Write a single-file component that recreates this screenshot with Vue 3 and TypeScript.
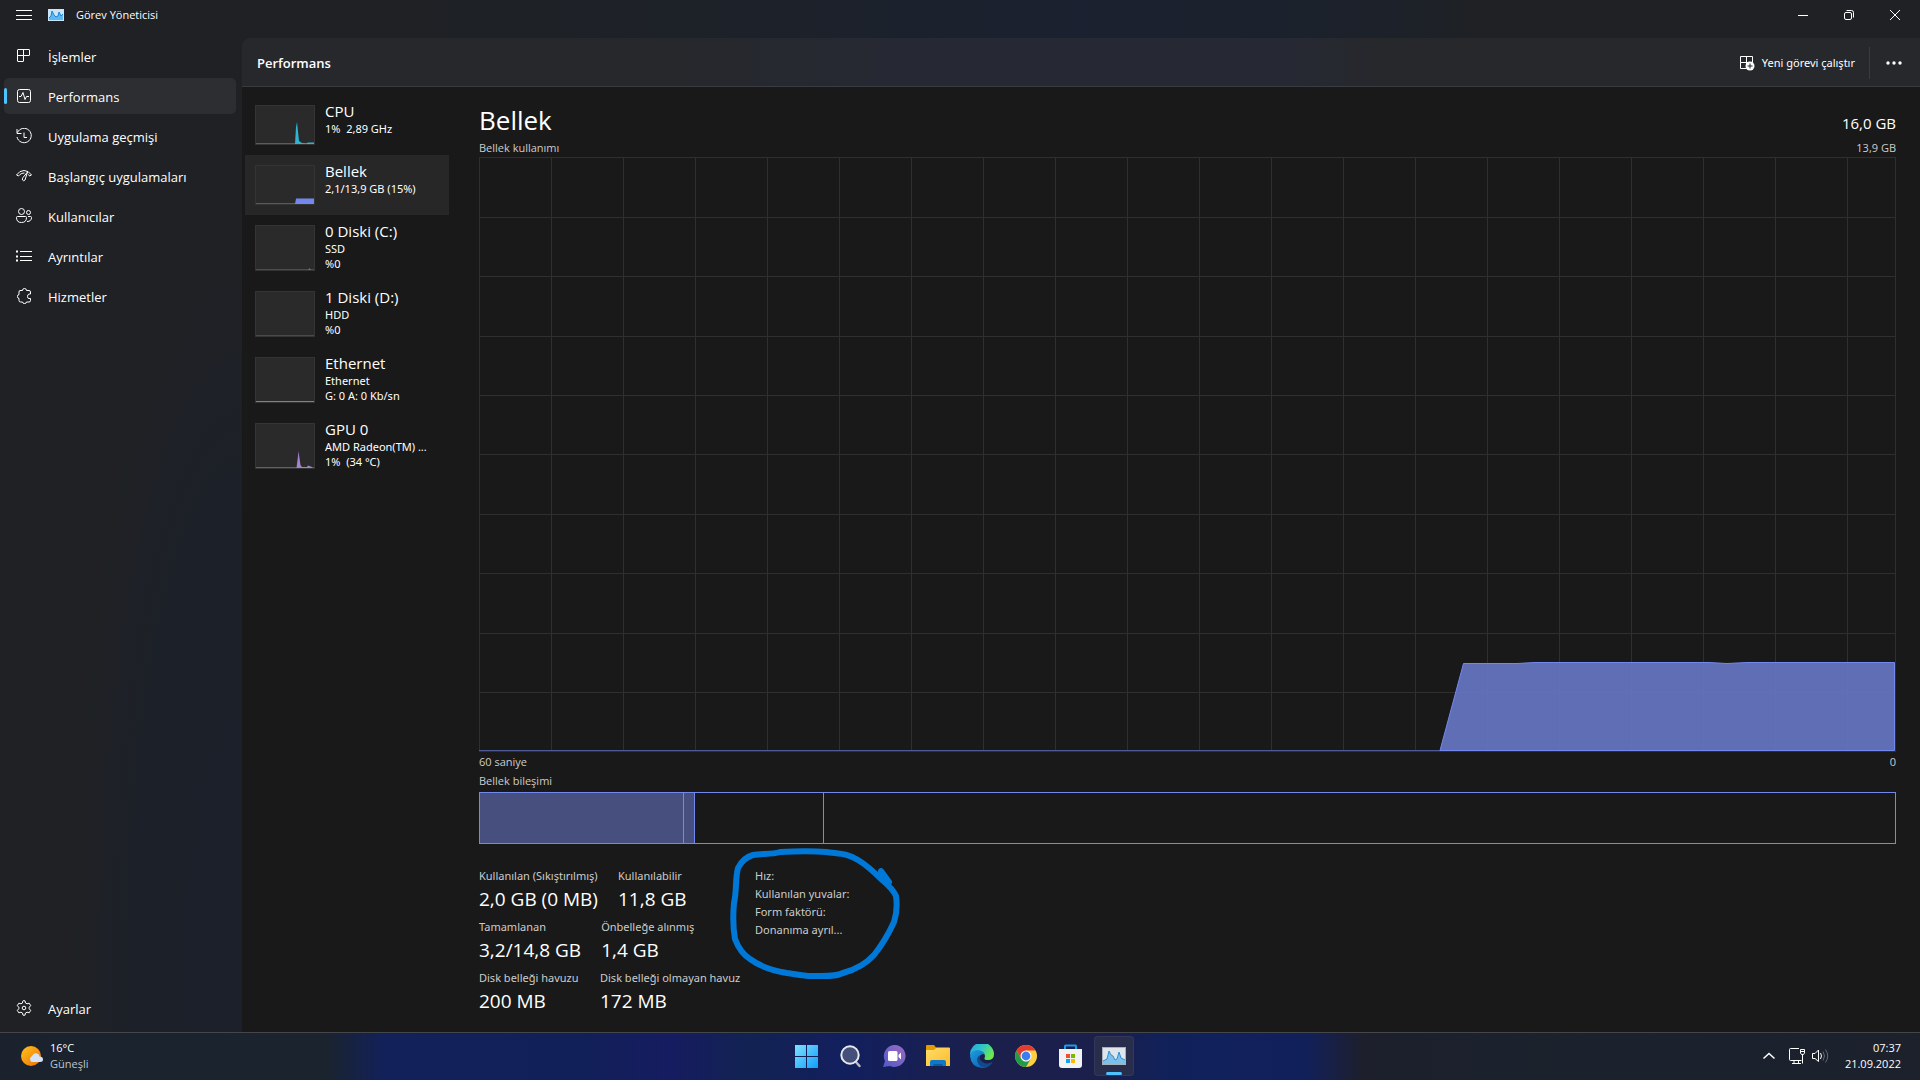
<script setup lang="ts">
interface Device {
  name: string
  lines: string[]
  color: string
  height: number
  base: string
  shape: string
  selected?: boolean
}

interface Stat {
  label: string
  value: string
}

const navItems = [
  { id: 'processes', label: 'İşlemler' },
  { id: 'performance', label: 'Performans' },
  { id: 'history', label: 'Uygulama geçmişi' },
  { id: 'startup', label: 'Başlangıç uygulamaları' },
  { id: 'users', label: 'Kullanıcılar' },
  { id: 'details', label: 'Ayrıntılar' },
  { id: 'services', label: 'Hizmetler' },
]

const devices: Device[] = [
  {
    name: 'CPU',
    lines: ['1%  2,89 GHz'],
    color: '#2fb4d4',
    height: 40,
    base: '#27707f',
    shape: 'M40 39L41 22L42 17L44 36L47 38L51 38.500L53 37.500L59 37.500V39Z',
  },
  {
    name: 'Bellek',
    lines: ['2,1/13,9 GB (15%)'],
    color: '#7387ee',
    height: 40,
    base: '#4c568f',
    shape: 'M40 39L41 33.500H59V39Z',
    selected: true,
  },
  {
    name: '0 Diski (C:)',
    lines: ['SSD', '%0'],
    color: '#2a8f89',
    height: 46,
    base: '#245c5a',
    shape: 'M53 45L54.500 43L56 45Z',
  },
  { name: '1 Diski (D:)', lines: ['HDD', '%0'], color: '#2a8f89', height: 46, base: '#245c5a', shape: '' },
  { name: 'Ethernet', lines: ['Ethernet', 'G: 0 A: 0 Kb/sn'], color: '#c36f9b', height: 46, base: '#a9688c', shape: '' },
  {
    name: 'GPU 0',
    lines: ['AMD Radeon(TM) ...', '1%  (34 °C)'],
    color: '#a283cf',
    height: 46,
    base: '#685782',
    shape: 'M41.500 45L43 33L43.500 28L45.500 42L47 44L52 44L53 42.500L57 44V45Z',
  },
]

const statRows: Stat[][] = [
  [
    { label: 'Kullanılan (Sıkıştırılmış)', value: '2,0 GB (0 MB)' },
    { label: 'Kullanılabilir', value: '11,8 GB' },
  ],
  [
    { label: 'Tamamlanan', value: '3,2/14,8 GB' },
    { label: 'Önbelleğe alınmış', value: '1,4 GB' },
  ],
  [
    { label: 'Disk belleği havuzu', value: '200 MB' },
    { label: 'Disk belleği olmayan havuz', value: '172 MB' },
  ],
]

const specs = ['Hız:', 'Kullanılan yuvalar:', 'Form faktörü:', 'Donanıma ayrıl...']

const columns = Array.from({ length: 20 }, (_, i) => i * 72)
const rows = [0, 60, 119, 179, 238, 297, 357, 416, 476, 535, 594]
</script>

<template>
  <div class="desktop">
    <div class="window">
      <header class="titlebar">
        <button class="menu-button" aria-label="Menü">
          <svg width="16" height="16" viewBox="0 0 16 16"><path d="M0 3.500H16M0 8.500H16M0 12.500H16" class="thin" /></svg>
        </button>
        <svg class="app-icon" width="16" height="12" viewBox="0 0 16 12">
          <rect width="16" height="12" fill="#c9e6f8" />
          <path d="M1 11V9L3 7L4 2L6 6L8 8L10 7L11 3L13 7L15 5V11Z" fill="#5db8f2" />
          <path d="M1 9L3 7L4 2L6 6L8 8L10 7L11 3L13 7L15 5" fill="none" stroke="#1c83d1" />
        </svg>
        <span class="app-title">Görev Yöneticisi</span>
        <div class="caption">
          <button aria-label="Simge durumuna küçült">
            <svg width="12" height="12" viewBox="0 0 12 12"><path d="M1 6.500H11" class="thin" /></svg>
          </button>
          <button aria-label="Önceki boyut">
            <svg width="12" height="12" viewBox="0 0 12 12">
              <rect x="1.500" y="3.500" width="7" height="7" rx="1.500" class="thin" />
              <path d="M3.500 1.500H8.500Q10.500 1.500 10.500 3.500V8.500" class="thin" />
            </svg>
          </button>
          <button aria-label="Kapat">
            <svg width="12" height="12" viewBox="0 0 12 12"><path d="M1 1L11 11M11 1L1 11" class="thin" /></svg>
          </button>
        </div>
      </header>

      <div class="body">
        <nav class="sidebar">
          <button
            v-for="item in navItems"
            :key="item.id"
            class="nav-item"
            :class="{ active: item.id === 'performance' }"
          >
            <svg class="nav-icon" width="16" height="16" viewBox="0 0 16 16">
              <path
                v-if="item.id === 'processes'"
                d="M2 1.500H13Q13.500 1.500 13.500 2V7Q13.500 7.500 13 7.500H7.500V13Q7.500 13.500 7 13.500H2Q1.500 13.500 1.500 13V2Q1.500 1.500 2 1.500ZM1.500 7.500H7.500V1.500"
              />
              <g v-else-if="item.id === 'performance'">
                <rect x="1.500" y="1.500" width="13" height="13" rx="2" />
                <path d="M3 8.500H5L7 4.500L9 11.500L10.500 8.500H13" stroke-linejoin="round" />
              </g>
              <g v-else-if="item.id === 'history'">
                <path d="M1.500 4.500A7.200 7.200 0 1 1 1 9M1 1V5.500H5.500M8 4.500V9.500H11" />
              </g>
              <g v-else-if="item.id === 'startup'">
                <path d="M.5 7Q3.500 2.500 8 2.500Q12.500 2.500 15.500 7M.5 7L2.500 8L4 6.500M15.500 7L13.500 8L12.500 6.500M4 6.500Q5.500 5 8.500 5" />
                <path d="M11.500 4L9 12Q7.500 13.500 6.500 12Q6 11 7 9.500Z" />
              </g>
              <g v-else-if="item.id === 'users'">
                <circle cx="5.500" cy="3.500" r="3" />
                <circle cx="12.500" cy="4.500" r="2" />
                <path d="M1.500 8.500H9.500Q10.500 8.500 10.500 9.500Q10.500 14.500 5.500 14.500Q.5 14.500 .5 9.500Q.5 8.500 1.500 8.500ZM12 8.500H14.500Q15.500 8.500 15.500 9.500Q15.500 13.500 11 13.500" />
              </g>
              <g v-else-if="item.id === 'details'">
                <path d="M4 3.500H16M4 8.500H16M4 12.500H16" />
                <path d="M0 3.500H2M0 8.500H2M0 12.500H2" stroke-width="2" />
              </g>
              <path
                v-else
                stroke-linejoin="round"
                d="M4 2.500H6.500Q6.500 .5 8.500 .5Q10.500 .5 10.500 2.500H13Q14.500 2.500 14.500 4V6H13Q11.500 6.500 11.500 8.500Q11.500 10.500 13 10.500H14.500V12.500Q14.500 14 13 14H10.500Q10.500 15.500 8.500 15.500Q6.500 15.500 6.500 14H4.500Q3 14 3 12.500V10.500Q1.500 10.500 1.500 8.500Q1.500 6.500 3 6.500V4Q3 2.500 4 2.500Z"
              />
            </svg>
            <span>{{ item.label }}</span>
          </button>
          <button class="nav-item settings">
            <svg class="nav-icon" width="16" height="16" viewBox="0 0 16 16">
              <path
                stroke-linejoin="round"
                d="M6.500 1.500L7 .8H9L9.500 3L11 3.800L13.200 3.200L14.700 5.700L13.200 7.200V8.800L14.700 10.300L13.200 12.800L11 12.200L9.500 13L9 15.200H7L6.500 13L5 12.200L2.800 12.800L1.300 10.300L2.800 8.800V7.200L1.300 5.700L2.800 3.200L5 3.800L6.500 3Z"
              />
              <circle cx="8" cy="8" r="1.800" />
            </svg>
            <span>Ayarlar</span>
          </button>
        </nav>

        <main class="panel">
          <div class="toolbar">
            <h1>Performans</h1>
            <button class="run-task">
              <svg width="16" height="16" viewBox="0 0 16 16">
                <path d="M1.500 1.500H13.500V7.500H1.500ZM7.500 1.500V13.500M1.500 7.500V13.500H7.500" class="thin" />
                <circle cx="11" cy="11" r="4.500" fill="#fff" />
                <path d="M11 8.500V13.500M8.500 11H13.500" stroke="#222" />
              </svg>
              <span>Yeni görevi çalıştır</span>
            </button>
            <button class="more" aria-label="Diğer seçenekler">
              <svg width="16" height="4" viewBox="0 0 16 4" fill="#fff">
                <circle cx="2" cy="2" r="1.700" /><circle cx="8" cy="2" r="1.700" /><circle cx="14" cy="2" r="1.700" />
              </svg>
            </button>
          </div>

          <div class="content">
            <div class="devices">
              <button v-for="device in devices" :key="device.name" class="device" :class="{ selected: device.selected }">
                <svg class="thumb" width="60" :height="device.height" :viewBox="`0 0 60 ${device.height}`">
                  <rect x=".5" y=".5" width="59" :height="device.height - 1" fill="#2a2a2a" stroke="#343434" />
                  <path :d="`M1 ${device.height - 1.5}H59`" :stroke="device.base" />
                  <path v-if="device.shape" :d="device.shape" :fill="device.color" />
                </svg>
                <span class="device-text">
                  <span class="device-name">{{ device.name }}</span>
                  <span v-for="line in device.lines" :key="line" class="device-line">{{ line }}</span>
                </span>
              </button>
            </div>

            <section class="detail">
              <div class="detail-head">
                <h2>Bellek</h2>
                <span class="capacity">16,0 GB</span>
              </div>
              <div class="axis">
                <span>Bellek kullanımı</span>
                <span>13,9 GB</span>
              </div>
              <div class="chart">
                <svg viewBox="0 0 1417 595" preserveAspectRatio="none" aria-hidden="true">
                  <g stroke="#2f2f2f" fill="none">
                    <path v-for="x in columns" :key="`c${x}`" :d="`M${x + 0.5} 0V595`" vector-effect="non-scaling-stroke" />
                    <path d="M1416.500 0V595" vector-effect="non-scaling-stroke" />
                    <path v-for="y in rows" :key="`r${y}`" :d="`M0 ${y + 0.5}H1417`" vector-effect="non-scaling-stroke" />
                  </g>
                  <path d="M0 593.500H961" stroke="#4e5998" vector-effect="non-scaling-stroke" />
                  <path
                    d="M961 593.500L984.500 506.500H1038L1056 505.500H1230L1248 506.500L1268 505.500H1415.500V593.500Z"
                    fill="#6878c8"
                    fill-opacity=".9"
                    stroke="#7388ee"
                    vector-effect="non-scaling-stroke"
                  />
                </svg>
              </div>
              <div class="axis seconds">
                <span>60 saniye</span>
                <span>0</span>
              </div>
              <div class="axis composition-label"><span>Bellek bileşimi</span></div>
              <div class="composition">
                <span class="segment used"></span>
                <span class="segment modified"></span>
                <span class="segment standby"></span>
              </div>

              <div class="figures">
                <div class="stats">
                  <dl v-for="(row, i) in statRows" :key="i" class="stat-row">
                    <div v-for="stat in row" :key="stat.label" class="stat">
                      <dt>{{ stat.label }}</dt>
                      <dd>{{ stat.value }}</dd>
                    </div>
                  </dl>
                </div>
                <div class="specs">
                  <span v-for="spec in specs" :key="spec">{{ spec }}</span>
                  <svg class="marker" width="180" height="136" viewBox="0 0 180 136" aria-hidden="true">
                    <path
                      d="M26 10C34 8 44 10 53 7C70 6 88 6 99 7C112 9 120 8 131 15C141 21 149 29 154 34C160 39 166 44 169 51C170 58 170 68 167 77C162 88 155 100 147 110C137 121 127 125 116 128C108 132 98 131 84 131C76 131 68 129 60 128C47 126 35 123 23 114C15 109 11 102 8 94C6 83 6 69 7 58C10 45 8 34 11 23C14 17 19 12 26 10Z"
                    />
                    <path d="M154 26L162 37L153 32Z" />
                  </svg>
                </div>
              </div>
            </section>
          </div>
        </main>
      </div>
    </div>

    <footer class="taskbar">
      <button class="weather">
        <svg width="24" height="22" viewBox="0 0 24 22">
          <defs>
            <linearGradient id="sun" x1="0" y1="0" x2="1" y2="1"><stop stop-color="#ffc61a" /><stop offset="1" stop-color="#ee6c0a" /></linearGradient>
          </defs>
          <circle cx="11" cy="11" r="10" fill="url(#sun)" />
          <path d="M11.500 17A3.500 3.500 0 0 1 12 11Q13.500 7.500 17 8.500Q19.500 9.200 19.500 11.500Q23 11.500 23 14.500Q23 17 20 17Z" fill="#d5e3f8" />
        </svg>
        <span class="weather-text"><span>16°C</span><span class="muted">Güneşli</span></span>
      </button>

      <div class="apps">
        <button aria-label="Başlat">
          <svg width="24" height="24" viewBox="0 0 24 24">
            <defs><linearGradient id="win" x1="0" y1="0" x2="1" y2="1"><stop stop-color="#7fe0ff" /><stop offset="1" stop-color="#109dfa" /></linearGradient></defs>
            <path d="M1 1H12V12H1ZM13 1H24V12H13ZM1 13H12V24H1ZM13 13H24V24H13Z" fill="url(#win)" />
          </svg>
        </button>
        <button aria-label="Ara">
          <svg width="24" height="24" viewBox="0 0 24 24">
            <path d="M17 17L21.500 22" stroke="#b9bac4" stroke-width="2.500" stroke-linecap="round" />
            <circle cx="12" cy="11" r="8.700" fill="#45507a" stroke="#e8e8ee" stroke-width="2" />
          </svg>
        </button>
        <button aria-label="Sohbet">
          <svg width="24" height="24" viewBox="0 0 24 24">
            <defs><linearGradient id="chat" x1="1" y1="0" x2="0" y2="1"><stop stop-color="#9c6bc0" /><stop offset="1" stop-color="#5059cc" /></linearGradient></defs>
            <path d="M13 1A11 11 0 1 1 8 22L1 23L3 17A11 11 0 0 1 13 1Z" fill="url(#chat)" />
            <rect x="6" y="7" width="9.500" height="10" rx="1.500" fill="#fff" />
            <path d="M16.500 11L19 8.500V15.500L16.500 13Z" fill="#fff" />
          </svg>
        </button>
        <button aria-label="Dosya Gezgini">
          <svg width="24" height="24" viewBox="0 0 24 24">
            <defs><linearGradient id="folder" x1="0" y1="0" x2="1" y2="1"><stop stop-color="#ffdc68" /><stop offset="1" stop-color="#fcbc2c" /></linearGradient></defs>
            <path d="M0 2Q0 1 1 1H8L10 3.500L8 7H0Z" fill="#e29b06" />
            <path d="M0 6H8L10 3.500H23Q24 3.500 24 4.500V22H0Z" fill="url(#folder)" />
            <path d="M4 22V18Q4 16 6 16H18Q20 16 20 18V22Z" fill="#1178c8" />
            <path d="M7.500 22V20H16.500V22Z" fill="#0b5ba4" />
          </svg>
        </button>
        <button aria-label="Microsoft Edge">
          <svg width="24" height="24" viewBox="0 0 24 24">
            <defs>
              <linearGradient id="edgeTop" x1="0" y1="0" x2="1" y2=".5"><stop stop-color="#1fa3e0" /><stop offset=".55" stop-color="#33c6c4" /><stop offset="1" stop-color="#6bea4a" /></linearGradient>
              <linearGradient id="edgeSide" x1="0" y1="0" x2="1" y2="1"><stop stop-color="#1b9de2" /><stop offset="1" stop-color="#0c55a6" /></linearGradient>
            </defs>
            <path d="M0 11A12 12 0 0 1 24 10Q24 16 18 16Q14 16 14.500 14Q16 11 13 8.500Q6 5 0 11Z" fill="url(#edgeTop)" />
            <path d="M0 12Q1 6 8 6Q14 7 14.500 10Q9 10 9 15Q11 21 17 20Q20 20 22.500 18Q19 24 12 24Q1 23 0 12Z" fill="url(#edgeSide)" />
            <path d="M9.500 11Q5.500 15 8 19Q10 23 14 23.500Q20 22.500 22.500 18Q17 21 12.500 18Q8.500 15 9.500 11Z" fill="#114a8b" />
          </svg>
        </button>
        <button aria-label="Google Chrome">
          <svg width="24" height="24" viewBox="0 0 24 24">
            <circle cx="12" cy="12" r="11" fill="#ffcf42" />
            <path d="M2.500 6.500A11 11 0 0 1 21.500 6.500H12L7.200 14.800Z" fill="#e33b2e" />
            <path d="M2.500 6.500L7.200 14.800L12 17.500L16.800 14.800L12 23A11 11 0 0 1 2.500 6.500Z" fill="#239a48" />
            <circle cx="12" cy="12" r="5.500" fill="#fff" />
            <circle cx="12" cy="12" r="4.400" fill="#3c7df0" />
          </svg>
        </button>
        <button aria-label="Microsoft Store">
          <svg width="24" height="24" viewBox="0 0 24 24">
            <path d="M7 6V2Q7 1.500 7.500 1.500H17.500Q18 1.500 18 2V6" fill="none" stroke="#1b9be8" stroke-width="2" />
            <path d="M1 5H24V21Q24 24 21 24H4Q1 24 1 21Z" fill="#f1f2f3" />
            <path d="M8 10H12V14H8Z" fill="#f0502b" /><path d="M13 10H17V14H13Z" fill="#7db700" />
            <path d="M8 15H12V19H8Z" fill="#12a2ee" /><path d="M13 15H17V19H13Z" fill="#fdb700" />
          </svg>
        </button>
        <button class="running" aria-label="Görev Yöneticisi">
          <svg width="24" height="24" viewBox="0 0 24 24">
            <rect y="3" width="24" height="18" fill="#a9b1b8" />
            <rect x="1" y="4" width="22" height="16" fill="#dfe6eb" />
            <path d="M1 20V17L5 15L7 7L9 11L11 12L13 16L15 15L17 8L19 14L23 16V20Z" fill="#7cc1ec" />
            <path d="M1 17L5 15L7 7L9 11L11 12L13 16L15 15L17 8L19 14L23 16" fill="none" stroke="#2f8fd0" />
          </svg>
        </button>
      </div>

      <div class="tray">
        <button aria-label="Gizli simgeleri göster">
          <svg width="16" height="16" viewBox="0 0 16 16"><path d="M2.500 10.500L8 5.500L13.500 10.500" class="thin" stroke-width="1.500" /></svg>
        </button>
        <button class="network" aria-label="Ağ ve ses">
          <svg width="16" height="16" viewBox="0 0 16 16">
            <path d="M10 .5H1.500Q.5 .5 .5 1.500V11.500Q.5 12.500 1.500 12.500H12.500M5 12.500V15.500M9.500 12.500V15.500M3 15.500H12M13.500 7V15.500" class="thin" />
            <path d="M11.500 1.500H15.500V5L14.500 6.500H12.500L11.500 5ZM11.500 3.500H15.500" class="thin" />
          </svg>
          <svg width="17" height="16" viewBox="0 0 17 16">
            <path d="M.5 5.500H3L6.500 2V13.500L3 10.500H.5Z" class="thin" stroke-linejoin="round" />
            <path d="M8.500 5Q10.500 8 8.500 11" class="thin" />
            <path d="M11 3.500Q14 8 11 12.500M13.500 1.500Q18 8 13.500 14.500" fill="none" stroke="#646a72" />
          </svg>
        </button>
        <button class="clock"><span>07:37</span><span>21.09.2022</span></button>
      </div>
    </footer>
  </div>
</template>

<style>
body {
  margin: 0;
  background: #191919;
}
</style>

<style scoped>
.desktop {
  display: flex;
  flex-direction: column;
  min-height: 100vh;
  background: #191919;
  color: #fff;
  font-family: "Open Sans", "Noto Sans", sans-serif;
  font-size: 13px;
  line-height: 16px;
}

button {
  padding: 0;
  border: 0;
  background: none;
  color: inherit;
  font: inherit;
  text-align: left;
}

h1,
h2,
dl,
dd {
  margin: 0;
}

svg {
  display: block;
  flex: none;
}

.thin {
  fill: none;
  stroke: #fff;
}

.window {
  display: flex;
  flex: 1;
  flex-direction: column;
  background: linear-gradient(90deg, #202124 0%, #1f2125 22%, #1c212a 42%, #1b2130 56%, #1c212a 72%, #202124 78%);
}

.titlebar {
  display: flex;
  align-items: center;
  height: 30px;
  padding: 0 2px 8px 16px;
}

.app-icon {
  margin: 0 12px 0 16px;
}

.app-title {
  font-size: 11px;
}

.caption {
  display: flex;
  margin-left: auto;
}

.caption button {
  display: flex;
  align-items: center;
  justify-content: center;
  width: 46px;
  height: 28px;
}

.body {
  display: flex;
  flex: 1;
}

.sidebar {
  display: flex;
  flex-direction: column;
  flex: none;
  gap: 4px;
  width: 232px;
  padding: 0 6px 6px 4px;
  background: radial-gradient(ellipse 70% 75% at 100% 95%, #1c202b 0%, #1c2029 60%, #1f2124 100%) #1f2024;
}

.nav-item {
  display: flex;
  align-items: center;
  gap: 16px;
  height: 36px;
  padding: 2px 0 0 12px;
  box-sizing: border-box;
  border-radius: 5px;
}

.nav-icon {
  margin-bottom: 2px;
  fill: none;
  stroke: #fff;
}

.nav-item.active {
  position: relative;
  background: #2d2e32;
}

.nav-item.active::before {
  content: "";
  position: absolute;
  left: 0;
  top: 10px;
  width: 3px;
  height: 16px;
  border-radius: 2px;
  background: #4cc2ff;
}

.settings {
  margin-top: auto;
}

.panel {
  display: flex;
  flex: 1;
  flex-direction: column;
  min-width: 0;
  overflow: hidden;
  border-radius: 8px 0 0 0;
  background: #191919;
}

.toolbar {
  display: flex;
  align-items: center;
  height: 47px;
  padding: 1px 0 0 15px;
  border-bottom: 1px solid #3a3a40;
  background: linear-gradient(90deg, #27282c 0%, #27282c 25%, #262833 38%, #262834 62%, #27282c 68%);
}

.toolbar h1 {
  flex: 1;
  font-size: 13px;
  font-weight: 600;
}

.run-task {
  display: flex;
  align-items: center;
  gap: 7px;
  padding-right: 14px;
  font-family: "Noto Sans", sans-serif;
  font-size: 11px;
}

.more {
  display: flex;
  align-items: center;
  height: 32px;
  padding: 0 18px 0 16px;
  border-left: 1px solid #3a3b3f;
}

.content {
  display: flex;
  flex: 1;
}

.devices {
  flex: none;
  width: 204px;
  padding: 8px 30px 0 3px;
}

.device {
  display: flex;
  gap: 10px;
  width: 100%;
  padding: 10px;
}

.device.selected {
  background: #272727;
}

.device-text {
  display: flex;
  flex-direction: column;
  white-space: pre;
}

.device-name {
  margin-bottom: 3px;
  font-size: 15px;
  line-height: 13px;
}

.device-line {
  font-family: "Noto Sans", sans-serif;
  font-size: 11px;
  line-height: 15px;
}

.detail {
  display: flex;
  flex: 1;
  flex-direction: column;
  min-width: 0;
  padding: 13px 24px 12px 0;
}

.detail-head {
  display: flex;
  align-items: center;
  justify-content: space-between;
  height: 40px;
}

.detail-head h2 {
  font-size: 26px;
  font-weight: 400;
  line-height: 36px;
}

.capacity {
  padding-top: 6px;
  font-size: 15px;
}

.axis {
  display: flex;
  justify-content: space-between;
  color: #ccc;
  font-size: 11px;
}

.chart {
  position: relative;
  flex: 1;
  min-height: 300px;
  margin-top: 1px;
}

.chart svg {
  position: absolute;
  inset: 0;
  width: 100%;
  height: 100%;
}

.seconds {
  padding-top: 2px;
}

.composition-label {
  padding: 3px 0;
}

.composition {
  display: flex;
  height: 50px;
  border: 1px solid #7388ee;
}

.segment {
  box-sizing: border-box;
  border-right: 1px solid #7388ee;
}

.used {
  width: 14.4%;
  background: #464f7d;
}

.modified {
  width: 0.8%;
  background: #464f7d;
}

.standby {
  width: 9.1%;
}

.figures {
  display: flex;
  padding-top: 23px;
}

.stats {
  width: 276px;
}

.stat-row {
  display: flex;
  gap: 20px;
  height: 51px;
  white-space: nowrap;
}

.stat {
  min-width: 101px;
}

.stat dt {
  color: #ccc;
  font-family: "Noto Sans", sans-serif;
  font-size: 11px;
  line-height: 18px;
}

.stat dd {
  font-size: 19px;
  line-height: 28px;
}

.specs {
  position: relative;
  display: flex;
  flex-direction: column;
  color: #ccc;
  font-family: "Noto Sans", sans-serif;
  font-size: 11px;
  line-height: 18px;
}

.marker {
  position: absolute;
  left: -28px;
  top: -22px;
  fill: none;
  stroke: #0078d7;
  stroke-width: 6;
  stroke-linejoin: round;
}

.taskbar {
  display: grid;
  grid-template-columns: 1fr auto 1fr;
  align-items: center;
  height: 45px;
  padding-bottom: 2px;
  border-top: 1px solid #45464a;
  background: linear-gradient(90deg, #1b222d 0%, #1a232e 17%, #12215a 20%, #112058 30%, #161c60 35%, #122252 39%, #121f5e 44%, #1b1f4c 51%, #1a1f4c 57%, #10215a 61%, #12205a 68%, #1d1f2c 71%, #1b222c 80%, #1c212c 100%);
  font-size: 11px;
}

.weather {
  display: flex;
  align-items: center;
  gap: 6px;
  padding-left: 20px;
}

.weather-text,
.clock {
  display: flex;
  flex-direction: column;
}

.muted {
  color: #bfc2c8;
}

.apps {
  display: flex;
  gap: 4px;
}

.apps button {
  position: relative;
  display: flex;
  align-items: center;
  justify-content: center;
  width: 40px;
  height: 40px;
  border-radius: 4px;
}

.apps .running {
  background: #292d4c;
  box-shadow: inset 0 0 0 1px #34375a;
}

.running::after {
  content: "";
  position: absolute;
  left: 12px;
  bottom: 1px;
  width: 16px;
  height: 3px;
  border-radius: 2px;
  background: #4cc2ff;
}

.tray {
  display: flex;
  align-items: center;
  justify-content: flex-end;
  gap: 12px;
  padding-right: 19px;
}

.network {
  display: flex;
  gap: 7px;
}

.clock {
  align-items: flex-end;
  padding-left: 4px;
}
</style>
